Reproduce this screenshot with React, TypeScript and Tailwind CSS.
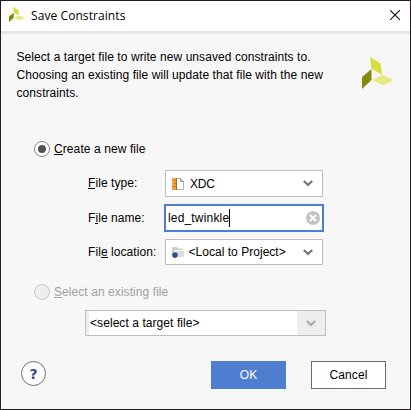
import React from 'react';

function Logo({ className }: { className: string }) {
  return (
    <svg viewBox="0 0 32 32" className={className} preserveAspectRatio="none">
      <path d="M8 0 L18.7 6.5 L20 18 L9.5 11.5Z" fill="#d6e03c" />
      <path d="M0 20 L9.5 12 V23 L0 32Z" fill="#868a0a" />
      <path d="M10 23 L20.5 18 L32 23 L21 28.3Z" fill="#e3ea80" />
    </svg>
  );
}

function Chevron({ className }: { className: string }) {
  return (
    <svg viewBox="0 0 10 7" className={`h-[7px] w-[10px] shrink-0 ${className}`} fill="none">
      <path d="M0.8 1 L5 4.9 L9.2 1" stroke="currentColor" strokeWidth="2.2" />
    </svg>
  );
}

function Mnemonic({ children }: { children: string }) {
  return <span className="h-[13px] border-b border-current">{children}</span>;
}

function Radio({ checked }: { checked?: boolean }) {
  return (
    <span
      className={`flex size-4 shrink-0 items-center justify-center rounded-full border ${
        checked ? 'border-[#8a8a8a] bg-white' : 'border-[#c8c8c8] bg-[#eeeeee]'
      }`}
    >
      {checked && <span className="size-2 rounded-full bg-[#525252]" />}
    </span>
  );
}

export default function App() {
  return (
    <div className="flex h-[410px] w-[411px] flex-col overflow-hidden border border-[#241c20] bg-[#f7f7f7] font-['Liberation_Sans',Arial,sans-serif] text-[12px] leading-[14px] tracking-[0.07px] whitespace-pre text-black">
      <header className="flex h-[33px] shrink-0 items-start border-b-[3px] border-[#e6e6e6] bg-white pl-2">
        <Logo className="mt-[6px] h-[15px] w-4" />
        <h1 className="ml-[6px] mt-[6px] font-['Open_Sans',sans-serif] text-[12px] leading-[17px] tracking-[0.08px]">Save Constraints</h1>
        <svg viewBox="0 0 10 10" className="mr-[10px] ml-auto mt-[9px] size-[10px]" fill="none" stroke="#111" strokeWidth="1.1">
          <path d="M0 0 L10 10 M10 0 L0 10" />
        </svg>
      </header>

      <section className="flex h-[106px] shrink-0 items-start pl-[15.5px]">
        <p className="mt-[14px] leading-[18px]">
          {'Select a target file to write new unsaved constraints to.\nChoosing an existing file will update that file with the new\nconstraints.'}
        </p>
        <Logo className="mr-4 ml-auto mt-[23px] size-8" />
      </section>

      <div className="flex h-[18px] shrink-0 items-center pl-[33px]">
        <Radio checked />
        <span className="ml-1 flex tracking-[0.09px]"><Mnemonic>C</Mnemonic>reate a new file</span>
      </div>

      <div className="mt-[12px] flex h-[27px] shrink-0 items-center">
        <span className="ml-[87px] flex w-[76px] pb-px"><Mnemonic>F</Mnemonic>ile type:</span>
        <div className="ml-px flex h-[27px] w-[158px] items-center border border-[#bdbdbd] bg-white">
          <svg viewBox="0 0 12 12" className="ml-[6px] size-3" fill="none">
            <path d="M4.5 .5 H8.5 L11.5 3.5 V11.5 H4.5Z" fill="#fff" stroke="#b0b0b0" />
            <path d="M8.5 .5 V3.5 H11.5" stroke="#8c8c8c" />
            <path d="M0 0 H4 V12 H0Z" fill="#f2a13a" />
            <path d="M4.5 0 V12" stroke="#8f6a45" />
            <path d="M2 2.5 H4 M2 5.5 H4 M2 8.5 H4" stroke="#c47a20" />
          </svg>
          <span className="ml-[6px] tracking-[-0.2px]">XDC</span>
          <Chevron className="mr-[9px] ml-auto text-[#777]" />
        </div>
      </div>

      <div className="mt-[7px] flex h-7 shrink-0 items-center">
        <span className="ml-[87px] flex w-[76px]">F<Mnemonic>i</Mnemonic>le name:</span>
        <div className="flex h-7 w-[160px] items-center border-2 border-[#4f7dcf] bg-white pl-[2px]">
          <span className="tracking-[0.17px]">led_twinkle</span>
          <span className="h-[18px] w-px bg-black" />
          <svg viewBox="0 0 14 14" className="mr-[2px] ml-auto size-[14px]">
            <circle cx="7" cy="7" r="7" fill="#c3c3c3" />
            <path d="M4 4 L10 10 M10 4 L4 10" stroke="#fff" strokeWidth="2" />
          </svg>
        </div>
      </div>

      <div className="mt-[7px] flex h-[26px] shrink-0 items-center">
        <span className="ml-[87px] flex w-[76px]">Fil<Mnemonic>e</Mnemonic> location:</span>
        <div className="ml-px flex h-[26px] w-[158px] items-center border border-[#bdbdbd] bg-white">
          <svg viewBox="0 0 12 11" className="ml-[6px] h-[11px] w-3">
            <path d="M0 1 Q0 0 1 0 H5 L6 1.5 H10 Q11 1.5 11 3 H3 L1.5 6 H0Z" fill="#cfcfcf" />
            <path d="M3 4 H12 V10 H3Z" fill="#dcdcdc" />
            <path d="M1.3 6 L3 4 V6Z" fill="#e8e8e8" />
            <circle cx="2.9" cy="8.1" r="2.8" fill="#2d4f8b" />
          </svg>
          <span className="ml-[4.5px] tracking-[0.03px]">&lt;Local to Project&gt;</span>
          <Chevron className="mr-[9px] ml-auto text-[#777]" />
        </div>
      </div>

      <div className="mt-[18px] flex h-[18px] shrink-0 items-center pl-[33px] text-[#a0a0a0]">
        <Radio />
        <span className="ml-1 flex"><Mnemonic>S</Mnemonic>elect an existing file</span>
      </div>

      <div className="mt-[9px] ml-[84px] flex h-[26px] w-[241px] shrink-0 items-center border border-[#bdbdbd] bg-white">
        <span className="h-full w-[3px] bg-[#eee]" />
        <span className="ml-px">&lt;select a target file&gt;</span>
        <span className="ml-auto flex h-full w-7 items-center justify-center bg-[#eee]">
          <Chevron className="text-[#aaa]" />
        </span>
      </div>

      <footer className="mt-[25px] flex shrink-0 items-start pl-5">
        <button className="flex size-[25px] items-center justify-center rounded-full border border-[#707070] bg-white font-['DejaVu_Sans',sans-serif] text-[14px] font-bold text-[#2d4b85]">?</button>
        <button className="ml-[165px] h-7 w-[75px] bg-[#4f7dcf] text-white">OK</button>
        <button className="ml-[25px] h-7 w-[75px] border border-[#6b6b6b] bg-white">Cancel</button>
      </footer>
    </div>
  );
}
